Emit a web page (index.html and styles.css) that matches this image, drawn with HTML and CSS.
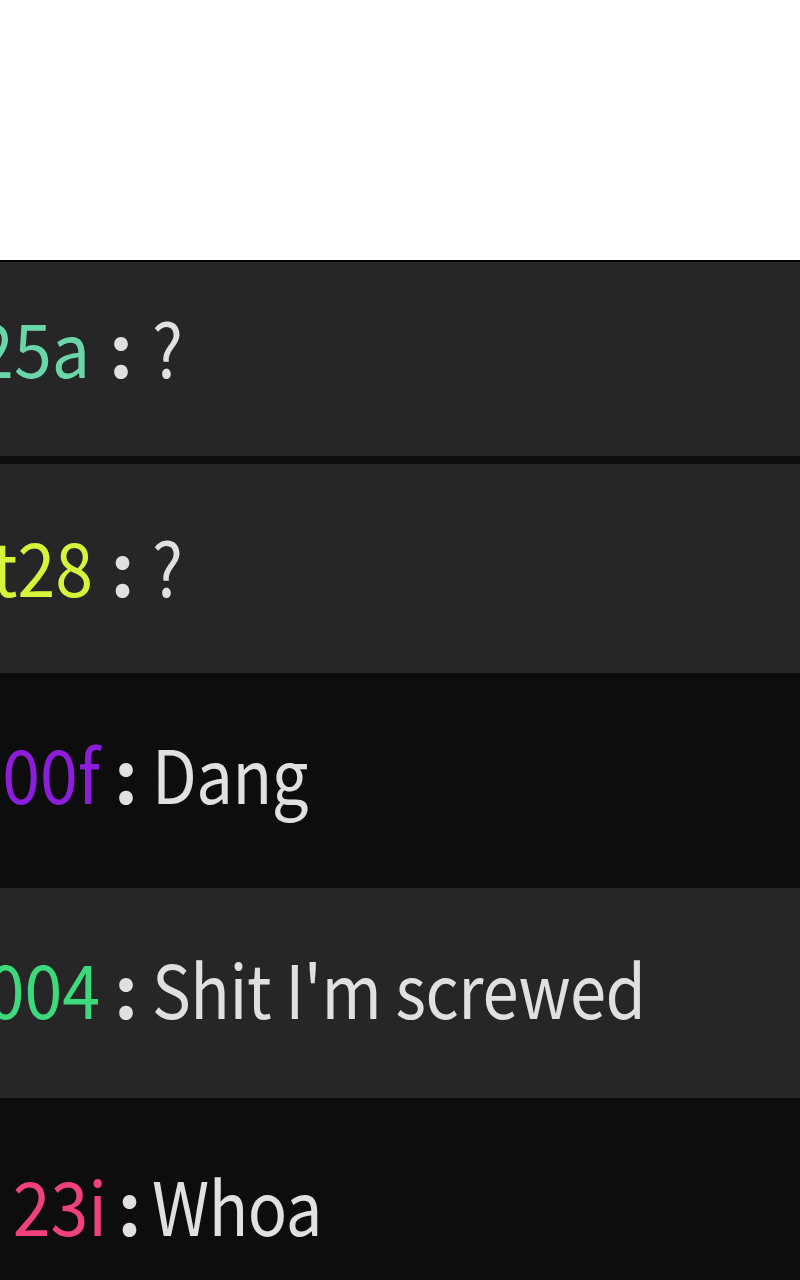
FILE: index.html
```html
<!DOCTYPE html>
<html lang="en">
<head>
  <meta charset="UTF-8">
  <meta name="viewport" content="width=device-width, initial-scale=1.0">
  <title>Chat</title>
  <link rel="stylesheet" href="styles.css">
</head>
<body>
  <div class="top"></div>
  <div class="chat">
    <div class="row light row-1">
      <span class="name mint">25a</span>
      <span class="colon">:</span>
      <span class="msg">?</span>
    </div>
    <div class="row light row-2">
      <span class="name lime">t28</span>
      <span class="colon">:</span>
      <span class="msg">?</span>
    </div>
    <div class="row dark row-3">
      <span class="name purple">00f</span>
      <span class="colon">:</span>
      <span class="msg">Dang</span>
    </div>
    <div class="row light row-4">
      <span class="name green">004</span>
      <span class="colon">:</span>
      <span class="msg">Shit I'm screwed</span>
    </div>
    <div class="row dark row-5">
      <span class="name pink">23i</span>
      <span class="colon">:</span>
      <span class="msg">Whoa</span>
    </div>
  </div>
</body>
</html>
```

FILE: styles.css
```css
/* Page */
body {
  margin: 0;
  background: #fff;
  font-family: "Noto Sans CJK SC", "Noto Sans", sans-serif;
  overflow: hidden;
}

.top {
  height: 260px;
  background: #fff;
  border-bottom: 2px solid #000;
}

.chat {
  background: #0e0e0e;
}

/* Chat rows */
.row {
  --name: 100px;
  display: flex;
  align-items: center;
  box-sizing: border-box;
  font-size: 74px;
  line-height: 1;
  color: #e0e0e0;
  white-space: nowrap;
}

.row-1 { --name: 90px; height: 194px; margin-bottom: 8px; padding-bottom: 27px; }
.row-2 { --name: 93px; height: 209px; padding-bottom: 8px; }
.row-3 { --name: 100px; height: 215px; padding-bottom: 18px; }
.row-4 { --name: 100px; height: 210px; padding-bottom: 12px; }
.row-5 { --name: 107px; height: 212px; }

.light {
  background: #262626;
}

.dark {
  background: #0d0d0d;
}

.name {
  display: flex;
  justify-content: flex-end;
  width: var(--name);
  flex-shrink: 0;
  transform: scaleX(0.92);
  transform-origin: right center;
}

.colon {
  width: calc(152px - var(--name));
  text-align: center;
  flex-shrink: 0;
  font-weight: 700;
}

.msg {
  letter-spacing: -0.5px;
  transform: scaleX(0.88);
  transform-origin: left center;
}

/* Name colours */
.mint { color: #6ad6a8; }
.lime { color: #d8f43a; }
.purple { color: #8c1ddb; }
.green { color: #3dd97c; }
.pink { color: #f0407e; }
```
